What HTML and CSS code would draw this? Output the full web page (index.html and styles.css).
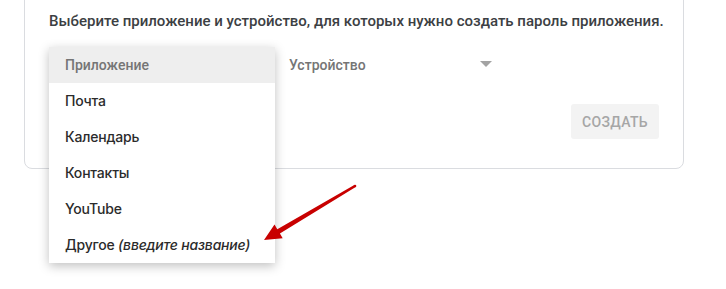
FILE: index.html
```html
<!DOCTYPE html>
<html lang="ru">
<head>
    <meta charset="UTF-8">
    <meta name="viewport" content="width=device-width, initial-scale=1.0">
    <title>Пароли приложений</title>
    <link rel="stylesheet" href="styles.css">
</head>
<body>
    <div class="card">
        <p class="lead">Выберите приложение и устройство, для которых нужно создать пароль приложения.</p>

        <div class="selects">
            <!-- app select is covered by the open menu -->
            <div class="select app-select"></div>
            <div class="select device-select">
                <span class="select-label">Устройство</span>
                <span class="caret"></span>
            </div>
        </div>

        <div class="actions">
            <button class="btn-create" disabled>Создать</button>
        </div>
    </div>

    <ul class="menu">
        <li class="menu-item menu-head">Приложение</li>
        <li class="menu-item">Почта</li>
        <li class="menu-item">Календарь</li>
        <li class="menu-item">Контакты</li>
        <li class="menu-item">YouTube</li>
        <li class="menu-item">Другое <em>(введите название)</em></li>
    </ul>

    <!-- red pointer drawn over the screenshot -->
    <svg class="pointer" width="726" height="289" viewBox="0 0 726 289">
        <polygon fill="#c80000" points="264,240 274.5,224.4 277.3,229.2 354.3,184.9 355.7,187.1 279.9,233.4 282.7,238.2"/>
        <circle cx="355" cy="186" r="1.3" fill="#c80000"/>
    </svg>
</body>
</html>
```

FILE: styles.css
```css
body {
    margin: 0;
    background-color: #fff;
    font-family: Roboto, "Liberation Sans", sans-serif;
    width: 726px;
    height: 289px;
    overflow: hidden;
    position: relative;
}

.card {
    margin: -20px 0 0 24px;
    width: 660px;
    height: 189px;
    border: 1px solid #dadce0;
    border-radius: 0 0 8px 8px;
    padding: 0 24px 0 24px;
    box-sizing: border-box;
}

.lead {
    margin: 0;
    padding-top: 30px;
    font-size: 15px;
    line-height: 20px;
    font-weight: 500;
    color: #3c4043;
    white-space: nowrap;
}

.selects {
    display: flex;
    margin-top: 16px;
    height: 36px;
}

.select {
    display: flex;
    align-items: center;
    height: 36px;
    font-size: 14px;
    font-weight: 500;
    color: #757575;
    box-sizing: border-box;
}

.app-select {
    width: 225px;
}

.device-select {
    width: 218px;
    padding-left: 15px;
    justify-content: space-between;
}

.caret {
    width: 0;
    height: 0;
    border-left: 6px solid transparent;
    border-right: 6px solid transparent;
    border-top: 6px solid #a3a3a3;
    margin-top: -2px;
}

.actions {
    display: flex;
    justify-content: flex-end;
    margin-top: 21px;
}

.btn-create {
    width: 88px;
    height: 35px;
    border: none;
    border-radius: 3px;
    background-color: #f3f3f3;
    color: #a6a6a6;
    font-family: Roboto, sans-serif;
    font-size: 14px;
    font-weight: 500;
    text-transform: uppercase;
    letter-spacing: 0.3px;
}

/* open dropdown */
.menu {
    position: absolute;
    left: 49px;
    top: 47px;
    width: 226px;
    margin: 0;
    padding: 0;
    list-style: none;
    background-color: #fff;
    box-shadow: 0 3px 10px rgba(0, 0, 0, 0.25);
}

.menu-item {
    height: 36px;
    line-height: 36px;
    padding-left: 16px;
    font-family: Inter, "Open Sans", sans-serif;
    font-size: 14px;
    font-weight: 500;
    letter-spacing: -0.2px;
    color: #2b2b2b;
}

.menu-item em {
    font-style: italic;
}

.menu-head {
    background-color: #eee;
    font-family: Roboto, sans-serif;
    letter-spacing: 0;
    color: #757575;
}

.pointer {
    position: absolute;
    left: 0;
    top: 0;
    pointer-events: none;
}
```
